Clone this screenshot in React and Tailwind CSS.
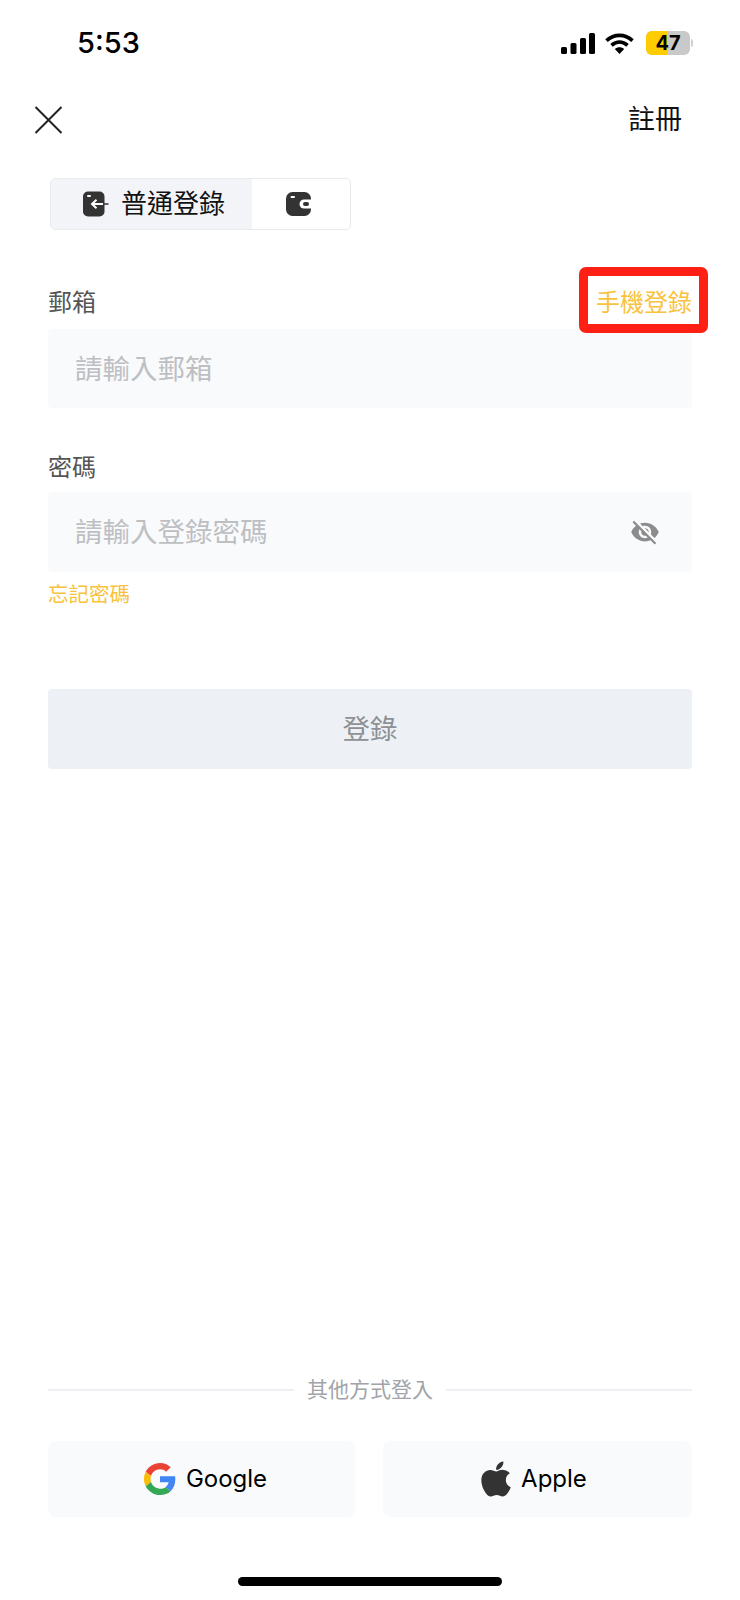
import React from "react";
import { MdVisibilityOff } from "react-icons/md";
import { FaApple } from "react-icons/fa";

const CJK = "font-['Inter','Noto_Sans_CJK_TC',sans-serif]";

function LoginIcon() {
  return (
    <svg width="26" height="26" viewBox="0 0 26 26" className="shrink-0">
      <rect x="0" y="0.5" width="21.5" height="25" rx="5" fill="#333333" />
      <rect x="4" y="4" width="4" height="2" rx="1" fill="#ffffff" />
      <path d="M20 13H25.5" stroke="#333333" strokeWidth="1.6" />
      <path d="M20 13H9M13.5 8.8L9 13L13.5 17.2" stroke="#ffffff" strokeWidth="2" fill="none" />
    </svg>
  );
}

function WalletIcon() {
  return (
    <svg width="25" height="24" viewBox="0 0 25 24">
      <rect x="0" y="0" width="25" height="24" rx="6.5" fill="#333333" />
      <rect x="4.5" y="4" width="4.5" height="2" rx="1" fill="#ffffff" />
      <path d="M25 7.5H18a4.5 4.5 0 0 0 0 9H25Z" fill="#ffffff" />
      <rect x="17" y="10" width="6" height="4" rx="2" fill="#333333" />
    </svg>
  );
}

function GoogleIcon() {
  return (
    <svg width="32" height="32" viewBox="0 0 48 48" className="shrink-0">
      <path fill="#EA4335" d="M24 9.5c3.54 0 6.71 1.22 9.21 3.6l6.85-6.85C35.9 2.38 30.47 0 24 0 14.62 0 6.51 5.38 2.56 13.22l7.98 6.19C12.43 13.72 17.74 9.5 24 9.5z" />
      <path fill="#4285F4" d="M46.98 24.55c0-1.57-.15-3.09-.38-4.55H24v9.02h12.94c-.58 2.96-2.26 5.48-4.78 7.18l7.73 6c4.51-4.18 7.09-10.36 7.09-17.65z" />
      <path fill="#FBBC05" d="M10.53 28.59c-.48-1.45-.76-2.99-.76-4.59s.27-3.14.76-4.59l-7.98-6.19C.92 16.46 0 20.12 0 24c0 3.88.92 7.54 2.56 10.78l7.97-6.19z" />
      <path fill="#34A853" d="M24 48c6.48 0 11.93-2.13 15.89-5.81l-7.73-6c-2.15 1.45-4.92 2.3-8.16 2.3-6.26 0-11.57-4.22-13.47-9.91l-7.98 6.19C6.51 42.62 14.62 48 24 48z" />
    </svg>
  );
}

function SignalIcon() {
  return (
    <svg width="34" height="21" viewBox="0 0 34 21">
      <rect x="0" y="14" width="6" height="7" rx="1.5" fill="#000" />
      <rect x="9.5" y="10" width="6" height="11" rx="1.5" fill="#000" />
      <rect x="19" y="5" width="6" height="16" rx="1.5" fill="#000" />
      <rect x="28" y="0" width="6" height="21" rx="1.5" fill="#000" />
    </svg>
  );
}

function WifiIcon() {
  return (
    <svg width="29" height="21" viewBox="0 0 29 21">
      <path d="M1.5 7.6C9 0.6 20 0.6 27.5 7.6" stroke="#000" strokeWidth="3.6" fill="none" />
      <path d="M6.5 12.4C11.5 8 17.5 8 22.5 12.4" stroke="#000" strokeWidth="3.6" fill="none" />
      <path d="M14.5 21L9.8 16C12.5 13.6 16.5 13.6 19.2 16Z" fill="#000" />
    </svg>
  );
}

export default function App() {
  return (
    <div className={`${CJK} relative flex h-[1600px] w-[740px] flex-col bg-white`}>
      {/* Status bar */}
      <div className="flex h-[85px] items-start justify-between pl-[77px] pr-[47px] pt-[25px]">
        <span className="text-[29px] leading-[35px] font-medium text-black font-['Inter',sans-serif]">5:53</span>
        <div className="flex items-center pt-[6px]">
          <SignalIcon />
          <div className="ml-[10px]"><WifiIcon /></div>
          <div className="relative ml-[12px] flex h-[24px] w-[44px] overflow-hidden rounded-[6px] bg-[#c9c9c9]">
            <div className="h-full w-[21px] bg-[#ffcc00]" />
            <span className="absolute inset-0 flex items-center justify-center text-[20px] font-bold leading-none text-black font-['Inter',sans-serif]">47</span>
          </div>
          <div className="ml-[1px] h-[8px] w-[2px] rounded-r-[2px] bg-[#d0d0d0]" />
        </div>
      </div>

      {/* Nav */}
      <div className="flex h-[68px] items-center justify-between pl-[34px] pr-[58px] pt-[1px]">
        <svg width="29" height="28" viewBox="0 0 29 28">
          <path d="M1.5 1L27.5 27M27.5 1L1.5 27" stroke="#222222" strokeWidth="2" fill="none" />
        </svg>
        <span className="text-[27px] leading-[34px] text-[#111111]">註冊</span>
      </div>

      <div className="flex flex-1 flex-col px-[48px]">
        {/* Tabs */}
        <div className="ml-[2px] mt-[25px] flex h-[52px] w-[301px] overflow-hidden rounded-[5px] border border-[#e8eaee] bg-white">
          <div className="flex w-[201px] items-center bg-[#f3f4f8] pl-[32px]">
            <LoginIcon />
            <span className="ml-[12px] text-[26px] leading-[34px] text-[#111111]">普通登錄</span>
          </div>
          <div className="flex flex-1 items-center justify-center pr-[6px]">
            <WalletIcon />
          </div>
        </div>

        {/* Email */}
        <div className="mt-[51px] flex h-[43px] items-center justify-between">
          <span className="text-[24px] leading-[30px] text-[#555555]">郵箱</span>
          <span className="text-[24px] leading-[30px] text-[#f9c23c]">手機登錄</span>
        </div>
        <div className="mt-[5px] flex h-[79px] items-center rounded-[4px] bg-[#f9fafc] pl-[27px] text-[27.5px] leading-[36px] text-[#bdbfc3]">
          請輸入郵箱
        </div>

        {/* Password */}
        <span className="mt-[45px] text-[24px] leading-[30px] text-[#555555]">密碼</span>
        <div className="mt-[9px] flex h-[80px] items-center justify-between rounded-[4px] bg-[#f9fafc] pl-[27px] pr-[32px] text-[27.5px] leading-[36px] text-[#bdbfc3]">
          <span>請輸入登錄密碼</span>
          <MdVisibilityOff className="h-[30px] w-[30px] text-[#8c8c8c]" />
        </div>
        <span className="mt-[10px] text-[20.5px] leading-[26px] text-[#f9c23c]">忘記密碼</span>

        {/* Submit */}
        <div className="mt-[81px] flex h-[80px] items-center justify-center rounded-[4px] bg-[#edf0f4] text-[27.5px] leading-[36px] text-[#8d9095]">
          登錄
        </div>

        {/* Other methods */}
        <div className="mt-auto flex items-center">
          <div className="h-[2px] flex-1 bg-[#eef0f3]" />
          <span className="mx-[13px] text-[21px] leading-[28px] text-[#a0a3a8]">其他方式登入</span>
          <div className="h-[2px] flex-1 bg-[#eef0f3]" />
        </div>
        <div className="mt-[37px] mb-[83px] flex gap-[28px]">
          <div className="flex h-[76px] flex-1 items-center justify-center gap-[10px] rounded-[8px] bg-[#f9fafc] pl-[8px]">
            <GoogleIcon />
            <span className="text-[24px] leading-[30px] text-black">Google</span>
          </div>
          <div className="flex h-[76px] flex-1 items-center justify-center gap-[7px] rounded-[8px] bg-[#f9fafc] pr-[10px]">
            <FaApple className="h-[40px] w-[36px] text-[#333333]" />
            <span className="text-[24px] leading-[30px] text-black">Apple</span>
          </div>
        </div>
      </div>

      {/* Home indicator */}
      <div className="absolute bottom-[14px] left-[238px] h-[9px] w-[264px] rounded-full bg-black" />

      {/* Annotation highlight */}
      <div className="absolute left-[579px] top-[267px] h-[66px] w-[129px] rounded-[7px] border-[9px] border-[#ff2015]" />
    </div>
  );
}
